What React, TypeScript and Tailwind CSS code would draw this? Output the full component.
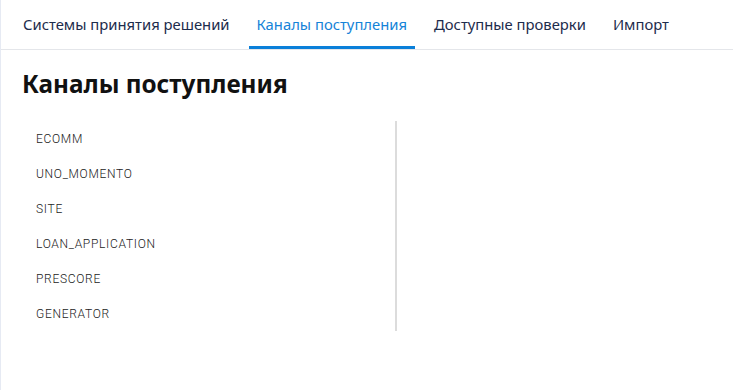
const tabs = ['Системы принятия решений', 'Каналы поступления', 'Доступные проверки', 'Импорт'];
const channels = ['ECOMM', 'UNO_MOMENTO', 'SITE', 'LOAN_APPLICATION', 'PRESCORE', 'GENERATOR'];

export default function App() {
  const active = 1;
  return (
    <div
      className="h-[390px] w-[733px] overflow-hidden border-l border-[#e6eaf3] bg-white"
      style={{ fontFamily: '"Noto Sans", Roboto, sans-serif' }}
    >
      <nav className="flex h-[50px] items-stretch gap-[11px] border-b border-[#e4e6ea] pl-[14px]">
        {tabs.map((t, i) => (
          <div
            key={t}
            className={`flex items-center border-b-[3px] px-2 pt-[3px] text-[14.8px] ${
              i === active ? 'border-[#0a7fd9] text-[#1583d8]' : 'border-transparent text-[#1d2c4c]'
            }`}
          >
            {t}
          </div>
        ))}
      </nav>

      <h1 className="ml-[21px] mt-[18px] text-[24.3px] font-bold leading-[32px] text-[#111]">Каналы поступления</h1>

      <div className="mt-[21px] flex">
        <ul className="ml-[21px] w-[375px] border-r-2 border-[#dcdcdc]">
          {channels.map((c) => (
            <li
              key={c}
              className="flex h-[35px] items-center pl-[14px] text-[12px] font-light tracking-[0.7px] text-[#222]"
              style={{ fontFamily: 'Roboto, "Noto Sans", sans-serif' }}
            >
              {c}
            </li>
          ))}
        </ul>
      </div>
    </div>
  );
}
